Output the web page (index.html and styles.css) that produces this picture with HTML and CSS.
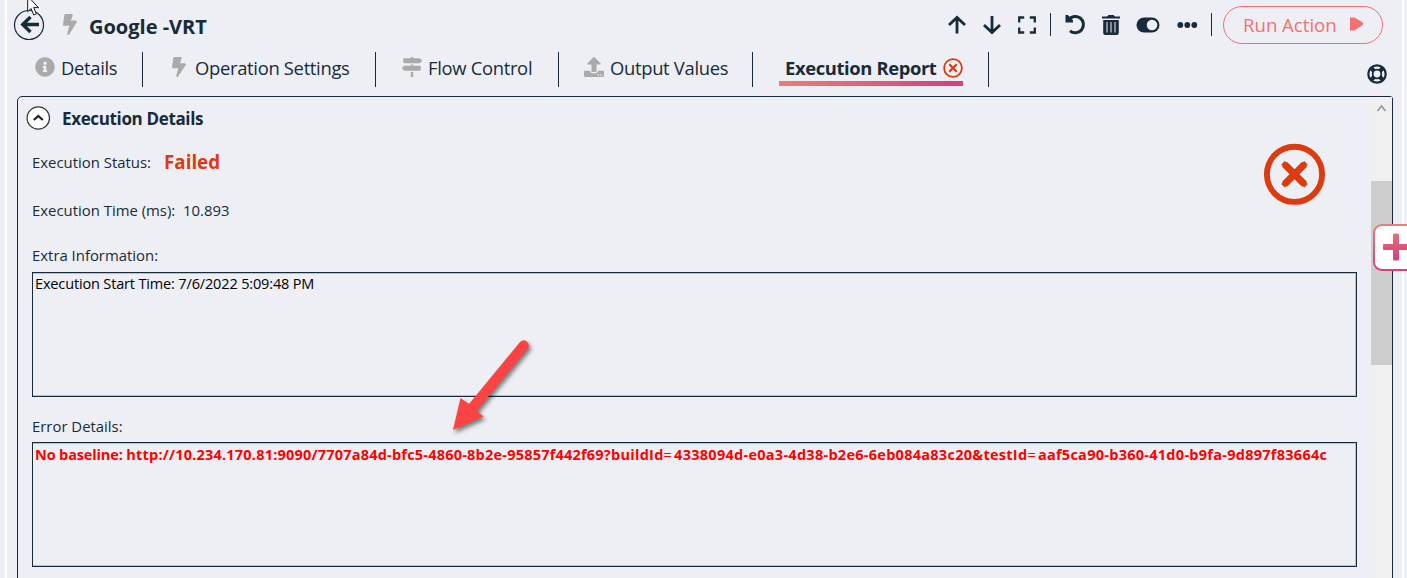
FILE: index.html
```html
<!DOCTYPE html>
<html lang="en">
<head>
<meta charset="utf-8">
<title>Google -VRT</title>
<link rel="stylesheet" href="styles.css">
</head>
<body>
<div class="shell">
  <header class="header">
    <svg class="back" width="32" height="32" viewBox="0 0 32 32"><circle cx="16" cy="16" r="14.5" fill="none" stroke="#172b3a" stroke-width="1.2"/><path d="M26 15.500H9M17.500 8 9.700 15.500l7.800 7.500" fill="none" stroke="#172b3a" stroke-width="3.300"/></svg>
    <svg class="bolt" width="14" height="21" viewBox="0 0 320 512" preserveAspectRatio="none"><path fill="#aaa" d="M296 160H180.600l42.600-129.800C227.200 15 215.700 0 200 0H56C44 0 33.800 8.900 32.200 20.800l-32 240C-1.700 275.200 9.500 288 24 288h118.700L96.600 482.500c-3.600 15.200 8 29.500 23.300 29.500 8.400 0 16.400-4.400 20.800-12l176-304c9.300-15.900-2.200-36-20.700-36z"/></svg>
    <h1 class="title">Google -VRT</h1>
    <div class="toolbar">
      <svg width="20" height="20" viewBox="0 0 20 20"><path d="M10 18.500V3M2 10l8-7.500 8 7.500" fill="none" stroke="#172b3a" stroke-width="2.800"/></svg>
      <svg class="down" width="20" height="20" viewBox="0 0 20 20"><path d="M10 1v16M2 10l8 7.500 8-7.500" fill="none" stroke="#172b3a" stroke-width="2.800"/></svg>
      <svg class="expand" width="20" height="20" viewBox="0 0 20 20"><path d="M2.200 7.500v-5h5M12.800 2.500h5v5M17.800 12.500v5h-5M7.200 17.500h-5v-5" fill="none" stroke="#172b3a" stroke-width="2.300"/></svg>
      <span class="sep sep-a"></span>
      <svg class="undo" width="21" height="21" viewBox="0 0 21 21"><path d="M3.600 5.800A8.200 8.200 0 1 1 5 16.900" fill="none" stroke="#172b3a" stroke-width="3"/><path d="M.5 1v7.500H8V6.300L2.800 1z" fill="#172b3a"/></svg>
      <svg class="trash" width="20" height="22" viewBox="0 0 20 22"><path fill="#172b3a" d="M1 2.500h5L7.500 1h5L14 2.500h5v2H1zM2.200 6h15.600v13a2 2 0 0 1-2 2H4.200a2 2 0 0 1-2-2z"/><path d="M6 8v10.500M10 8v10.500M14 8v10.500" stroke="#c8ced6" stroke-width="1.200"/></svg>
      <svg class="toggle" width="24" height="16" viewBox="0 0 24 16"><rect x=".5" y=".5" width="23" height="15" rx="7.500" fill="#172b3a"/><circle cx="16" cy="8" r="5.300" fill="#eeeff4"/></svg>
      <svg class="dots" width="21" height="8" viewBox="0 0 21 8"><g fill="#172b3a"><circle cx="3.300" cy="4" r="2.900"/><circle cx="10.300" cy="4" r="2.900"/><circle cx="17.300" cy="4" r="2.900"/></g></svg>
      <span class="sep sep-b"></span>
    </div>
    <button class="run"><span class="run-text">Run Action</span><svg width="14" height="14" viewBox="0 0 14 14"><path d="M0 .5h4.500L12 5Q14.500 6.800 12 8.500L4.500 13.500H0z" fill="#f27173"/></svg></button>
  </header>

  <nav class="tabs">
    <div class="tab details">
      <svg width="20" height="20" viewBox="0 0 512 512"><path fill="#aaa" d="M256 8C119 8 8 119 8 256s111 248 248 248 248-111 248-248S393 8 256 8zm0 110c23 0 42 19 42 42s-19 42-42 42-42-19-42-42 19-42 42-42zm56 254c0 7-5 12-12 12h-88c-7 0-12-5-12-12v-24c0-7 5-12 12-12h12v-64h-12c-7 0-12-5-12-12v-24c0-7 5-12 12-12h64c7 0 12 5 12 12v100h12c7 0 12 5 12 12z"/></svg>
      <span class="label">Details</span>
    </div>
    <div class="tab operation">
      <svg width="14" height="20" viewBox="0 0 320 512" preserveAspectRatio="none"><path fill="#aaa" d="M296 160H180.600l42.600-129.800C227.200 15 215.700 0 200 0H56C44 0 33.800 8.900 32.200 20.800l-32 240C-1.700 275.200 9.500 288 24 288h118.700L96.600 482.500c-3.600 15.200 8 29.500 23.300 29.500 8.400 0 16.400-4.400 20.800-12l176-304c9.300-15.900-2.200-36-20.700-36z"/></svg>
      <span class="label">Operation Settings</span>
    </div>
    <div class="tab flow">
      <svg width="20" height="20" viewBox="0 0 512 512"><path fill="#aaa" d="M507 85 464 41c-6-6-14-9-23-9H288V16c0-9-7-16-16-16h-32c-9 0-16 7-16 16v16H56c-13 0-24 11-24 24v80c0 13 11 24 24 24h385c9 0 17-3 23-9l43-43c6-7 6-17 0-23zM224 496c0 9 7 16 16 16h32c9 0 16-7 16-16V384h-64zm232-272H288v-32h-64v32H71c-9 0-17 3-23 9L5 277c-7 6-7 16 0 22l43 44c6 6 14 9 23 9h385c13 0 24-11 24-24v-80c0-13-11-24-24-24z"/></svg>
      <span class="label">Flow Control</span>
    </div>
    <div class="tab output">
      <svg width="20" height="20" viewBox="0 0 512 512"><path fill="#aaa" d="M296 384h-80c-13 0-24-11-24-24V192h-88c-17 0-26-21-14-34L242 6c8-8 20-8 28 0l152 152c12 13 3 34-14 34h-88v168c0 13-11 24-24 24zm216-8v112c0 13-11 24-24 24H24c-13 0-24-11-24-24V376c0-13 11-24 24-24h136v8c0 31 25 56 56 56h80c31 0 56-25 56-56v-8h136c13 0 24 11 24 24zm-124 88c0-11-9-20-20-20s-20 9-20 20 9 20 20 20 20-9 20-20zm64 0c0-11-9-20-20-20s-20 9-20 20 9 20 20 20 20-9 20-20z"/></svg>
      <span class="label">Output Values</span>
    </div>
    <div class="tab report">
      <div class="active">
        <span class="label">Execution Report</span>
        <svg width="20" height="20" viewBox="0 0 20 20"><circle cx="10" cy="10" r="8.900" fill="none" stroke="#dd3a10" stroke-width="1.800"/><path d="m6.300 6.300 7.400 7.400m0-7.400-7.400 7.400" stroke="#dd3a10" stroke-width="2.200"/></svg>
      </div>
    </div>
    <svg class="help" width="20" height="20" viewBox="0 0 20 20"><circle cx="10" cy="10" r="8.700" fill="none" stroke="#172b3a" stroke-width="2.200"/><circle cx="10" cy="10" r="4.300" fill="none" stroke="#172b3a" stroke-width="1.800"/><path d="m3.800 3.800 3.500 3.500m5.400 5.400 3.500 3.500m0-12.400-3.500 3.500m-5.400 5.400-3.500 3.500" stroke="#172b3a" stroke-width="4.300"/></svg>
  </nav>

  <main class="panel">
    <section class="content">
      <div class="section-head">
        <svg width="24" height="24" viewBox="0 0 24 24"><circle cx="12.300" cy="12" r="11.200" fill="#fff" stroke="#333" stroke-width="1.200"/><path d="m7.800 14 4.500-4 4.500 4" fill="none" stroke="#222" stroke-width="2.300"/></svg>
        <h2 class="section-title">Execution Details</h2>
      </div>
      <div class="summary">
        <div class="facts">
          <div class="fact status"><span class="key status-key">Execution Status:</span><strong class="failed">Failed</strong></div>
          <div class="fact time"><span class="key time-key">Execution Time (ms):</span><span class="key time-value">10.893</span></div>
        </div>
        <svg class="fail-icon" width="62" height="62" viewBox="0 0 62 62"><circle cx="30.500" cy="31.300" r="27.600" fill="none" stroke="#dd3a10" stroke-width="5.900"/><path d="m20.500 21.300 20 20m0-20-20 20" stroke="#dd3a10" stroke-width="7"/><path d="m19 19.800 23 23m0-23-23 23" stroke="#dd3a10" stroke-width="5"/></svg>
      </div>
      <div class="key extra-key">Extra Information:</div>
      <div class="box"><span class="start">Execution Start Time: 7/6/2022 5:09:48 PM</span></div>
      <div class="key error-key">Error Details:</div>
      <div class="box error-box"><span class="error"><span class="error-lead">No baseline: </span><span class="error-host">http://10.234.170.81:9090/7707a84d-bfc5-4860-8b2e-95857f442f69</span><span class="error-query">?buildId<span class="equals">=</span>4338094d-e0a3-4d38-b2e6-6eb084a83c20&amp;testId<span class="equals">=</span>aaf5ca90-b360-41d0-b9fa-9d897f83664c</span></span></div>
    </section>
    <div class="scrollbar">
      <svg width="21" height="22" viewBox="0 0 21 22"><path d="m6.500 14 4-5 4 5" fill="none" stroke="#949494" stroke-width="1.500"/></svg>
      <div class="thumb"></div>
    </div>
  </main>
</div>

<div class="add"><svg width="28" height="28" viewBox="0 0 28 28"><defs><linearGradient id="plus" x1="0" y1="0" x2="0" y2="1"><stop offset="0" stop-color="#e66f74"/><stop offset="1" stop-color="#d24080"/></linearGradient></defs><path d="M12.500.5h3a1.500 1.500 0 0 1 1.500 1.500v9h10a1 1 0 0 1 1 1v4a1 1 0 0 1-1 1H17v9a1.500 1.500 0 0 1-1.500 1.500h-3A1.500 1.500 0 0 1 11 26v-9H2a1 1 0 0 1-1-1v-4a1 1 0 0 1 1-1h9V2A1.500 1.500 0 0 1 12.500.5z" fill="url(#plus)"/></svg></div>
<svg class="pointer" width="110" height="120" viewBox="0 0 110 120"><path d="M90.200 21.800A5 5 0 0 1 97.800 28.200L46.500 91l7 5.500L23 110l7.500-32 8.500 6z" fill="#fc4343"/></svg>
<svg class="cursor" width="14" height="18" viewBox="0 0 14 18"><path d="M.7-4v15.700l3.400-3.200 2.600 6.500 2.700-1.100-2.700-6.300h4.700z" fill="#fff" stroke="#111827"/></svg>
</body>
</html>
```
FILE: styles.css
```css
* { box-sizing: border-box; }
body { margin: 0; width: 1407px; height: 578px; overflow: hidden; position: relative; background: #eeeff4; color: #172b3a; font-family: "Open Sans", "Noto Sans", sans-serif; }
svg { display: block; flex: none; overflow: visible; }
.shell { width: 1399px; height: 578px; margin-left: 5px; border-left: 2px solid #fff; border-right: 2px solid #fff; }

.header { height: 50px; display: flex; align-items: flex-start; }
.back { margin: 9px 0 0 6px; }
.bolt { margin: 14px 0 0 18px; }
.title { margin: 13px 0 0 12px; width: 858px; font-size: 20px; line-height: 28px; font-weight: 700; white-space: nowrap; flex: none; }
.toolbar { display: flex; align-items: center; height: 49px; width: 276px; flex: none; }
.down { margin-left: 15px; }
.expand { margin-left: 15px; }
.sep { width: 1px; height: 23px; background: #172b3a; flex: none; }
.sep-a { margin-left: 13px; }
.undo { margin-left: 14px; }
.trash { margin-left: 15px; }
.toggle { margin-left: 15px; }
.dots { margin-left: 17px; }
.sep-b { margin-left: 13px; }
.run { flex: none; width: 160px; height: 38px; margin: 6px 0 0; padding: 0 0 2px 19px; display: flex; align-items: center; border: 1px solid #f27173; border-radius: 19px; background: none; color: #f27173; font: 400 18.600px "Open Sans", sans-serif; }
.run-text { width: 107px; text-align: left; white-space: nowrap; }

.tabs { height: 46px; display: flex; align-items: flex-start; padding-top: 2px; }
.tab { height: 35px; flex: none; display: flex; align-items: center; border-right: 1px solid #172b3a; }
.tab svg { margin-top: -5px; }
.label { font: 400 18.400px/24px "Open Sans", "Noto Sans", sans-serif; letter-spacing: -.31px; white-space: nowrap; margin-top: -3px; }
.details { width: 136px; padding-left: 28px; gap: 6px; }
.operation { width: 233px; padding-left: 29px; gap: 9px; }
.flow { width: 183px; padding-left: 26px; gap: 6px; }
.output { width: 194px; padding-left: 25px; gap: 6px; }
.report { width: 236px; padding-left: 26px; }
.active { width: 184px; height: 32px; padding: 0 0 0 6px; display: flex; align-items: center; gap: 7px; background: linear-gradient(90deg, #e87f78, #d24080) bottom / 100% 5px no-repeat; }
.active .label { width: 151px; font-weight: 700; letter-spacing: -.38px; margin-top: -3px; }
.active svg { margin-top: -4px; }
.help { margin: 12px 0 0 378px; }

.panel { width: 1376px; height: 500px; margin-left: 10px; border: 1px solid #172b3a; border-radius: 5px 3px 0 0; display: flex; }
.content { width: 1353px; flex: none; padding: 9px 14px 0; }
.section-head { display: flex; align-items: center; gap: 12px; margin-left: -6px; height: 24px; }
.section-title { margin: 2px 0 0; font: 700 17px/24px "Open Sans", sans-serif; letter-spacing: -.35px; white-space: nowrap; }
.summary { display: flex; height: 102px; justify-content: space-between; }
.fact { display: flex; align-items: center; height: 24px; white-space: nowrap; }
.status { margin-top: 20px; }
.time { margin-top: 24px; }
.key { font-size: 14.900px; line-height: 22px; white-space: nowrap; }
.status-key { width: 132px; }
.time-key { width: 151px; }
.failed { color: #dd3a10; font-size: 18.800px; line-height: 24px; }
.fail-icon { margin: 13px 31px 0 0; }
.extra-key { margin-top: 12px; }
.box { width: 1325px; height: 125px; margin-top: 6px; border: 1px solid #172b3a; box-shadow: inset -1px 1px #b8c1c8, inset 0 -1px #b8c1c8; padding: 1px 2px; white-space: nowrap; }
.start { color: #000; font-size: 14.500px; line-height: 20px; letter-spacing: -.15px; display: block; }
.error-key { margin-top: 18px; }
.error-box { margin-top: 5px; }
.error { color: #f00; font-size: 14.500px; line-height: 22px; font-weight: 700; display: block; }
.error-lead { letter-spacing: -.14px; }
.error-host { letter-spacing: .21px; }
.error-query { letter-spacing: .27px; }
.equals { font-weight: 400; letter-spacing: 2.200px; }
.scrollbar { width: 21px; background: #f0f0f0; }
.thumb { height: 184px; margin-top: 62px; background: #cdcdcd; }

.add { position: absolute; left: 1373px; top: 224px; width: 48px; height: 47px; border: 2px solid transparent; border-radius: 9px; background: linear-gradient(#fff, #fff) padding-box, linear-gradient(#e87f78, #d24080) border-box; padding: 7px; }
.pointer { position: absolute; left: 430px; top: 320px; filter: drop-shadow(2px 3px 2px rgba(0, 0, 0, .5)); }
.cursor { position: absolute; left: 27px; top: 0; }
```
